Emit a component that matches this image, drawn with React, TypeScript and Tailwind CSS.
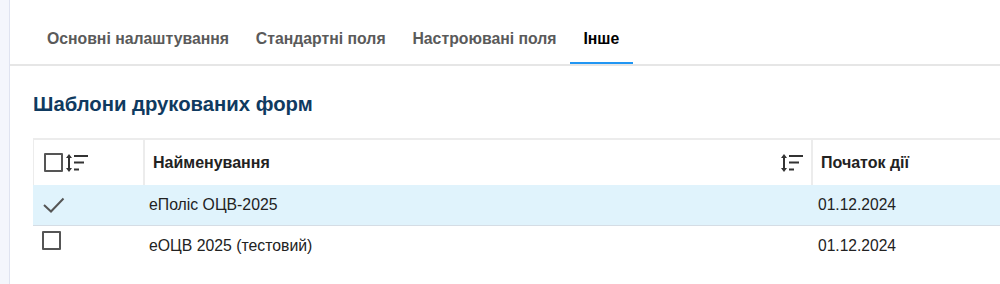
import { Fragment } from 'react';

const tabs = ['Основні налаштування', 'Стандартні поля', 'Настроювані поля', 'Інше'];

const rows = [
  { name: 'еПоліс ОЦВ-2025', start: '01.12.2024', selected: true },
  { name: 'еОЦВ 2025 (тестовий)', start: '01.12.2024', selected: false },
];

function SortIcon() {
  return (
    <svg width="22" height="20" viewBox="0 0 22 20" className="shrink-0">
      <path d="M3 4v12" stroke="#333" strokeWidth="2" />
      <path d="M0 5L3 1L6 5Z" fill="#333" />
      <path d="M0 15L3 19L6 15Z" fill="#333" />
      <path d="M8 3h14M8 9.5h10M8 16.5h5" stroke="#333" strokeWidth="2" />
    </svg>
  );
}

function Box() {
  return <div className="h-[19px] w-[19px] rounded-[1px] border-2 border-[#555]" />;
}

function Check() {
  return (
    <svg width="22" height="16" viewBox="0 0 22 16">
      <path d="M1 8L8 14.5L20.5 1.5" fill="none" stroke="#555" strokeWidth="2" />
    </svg>
  );
}

export default function App() {
  return (
    <div className="flex h-[284px] w-[1000px] overflow-hidden bg-white font-['Liberation_Sans',Arial,sans-serif]">
      <div className="w-[10px] shrink-0 border-r border-[#dfe3f0] bg-[#f4f6fc]" />
      <div className="flex min-w-0 flex-1 flex-col">
        <div className="flex border-b-2 border-[#e6e6e6] pl-[23.5px]">
          {tabs.map((tab, i) => {
            const active = i === tabs.length - 1;
            return (
              <div
                key={tab}
                className={
                  active
                    ? 'border-b-2 border-[#2196f3] px-[13.4px] pt-[30px] pb-[14px] text-[15.8px] leading-[18px] font-bold text-black'
                    : 'border-b-2 border-transparent px-[13.4px] pt-[30px] pb-[14px] text-[15.8px] leading-[18px] font-bold text-[#5a5a5a]'
                }
              >
                {tab}
              </div>
            );
          })}
        </div>

        <div className="pl-[23px]">
          <h2 className="mt-[27px] text-[20.3px] leading-[23px] font-bold text-[#0f3a60]">
            Шаблони друкованих форм
          </h2>

          <div className="mt-[22px] grid grid-cols-[110px_668px_1fr]">
            {/* header */}
            <div className="flex h-[47px] items-center gap-[3px] border-t-2 border-l border-[#ececec] pl-[10px]">
              <Box />
              <SortIcon />
            </div>
            <div className="flex h-[47px] items-center justify-between border-t-2 border-l-2 border-[#ececec] pr-[8px] pl-[8px] text-[16px] font-bold text-[#222]">
              <span>Найменування</span>
              <SortIcon />
            </div>
            <div className="flex h-[47px] items-center border-t-2 border-l-2 border-[#ececec] pl-[8px] text-[16px] font-bold text-[#222]">
              Початок дії
            </div>

            {rows.map((row) => (
              <Fragment key={row.name}>
                <div
                  className={
                    row.selected
                      ? 'flex h-[41px] items-center border-b border-[#d5dde5] bg-[#e0f3fc] pl-[10px]'
                      : 'flex h-[40px] items-start pt-[5px] pl-[9px]'
                  }
                >
                  {row.selected ? <Check /> : <Box />}
                </div>
                <div
                  className={
                    row.selected
                      ? 'flex h-[41px] items-center border-b border-[#d5dde5] bg-[#e0f3fc] pl-[6px] text-[15.8px] text-[#222]'
                      : 'flex h-[40px] items-center pl-[6px] text-[15.8px] text-[#222]'
                  }
                >
                  {row.name}
                </div>
                <div
                  className={
                    row.selected
                      ? 'flex h-[41px] items-center border-b border-[#d5dde5] bg-[#e0f3fc] pl-[7px] text-[15.6px] text-[#222]'
                      : 'flex h-[40px] items-center pl-[7px] text-[15.6px] text-[#222]'
                  }
                >
                  {row.start}
                </div>
              </Fragment>
            ))}
          </div>
        </div>
      </div>
    </div>
  );
}
